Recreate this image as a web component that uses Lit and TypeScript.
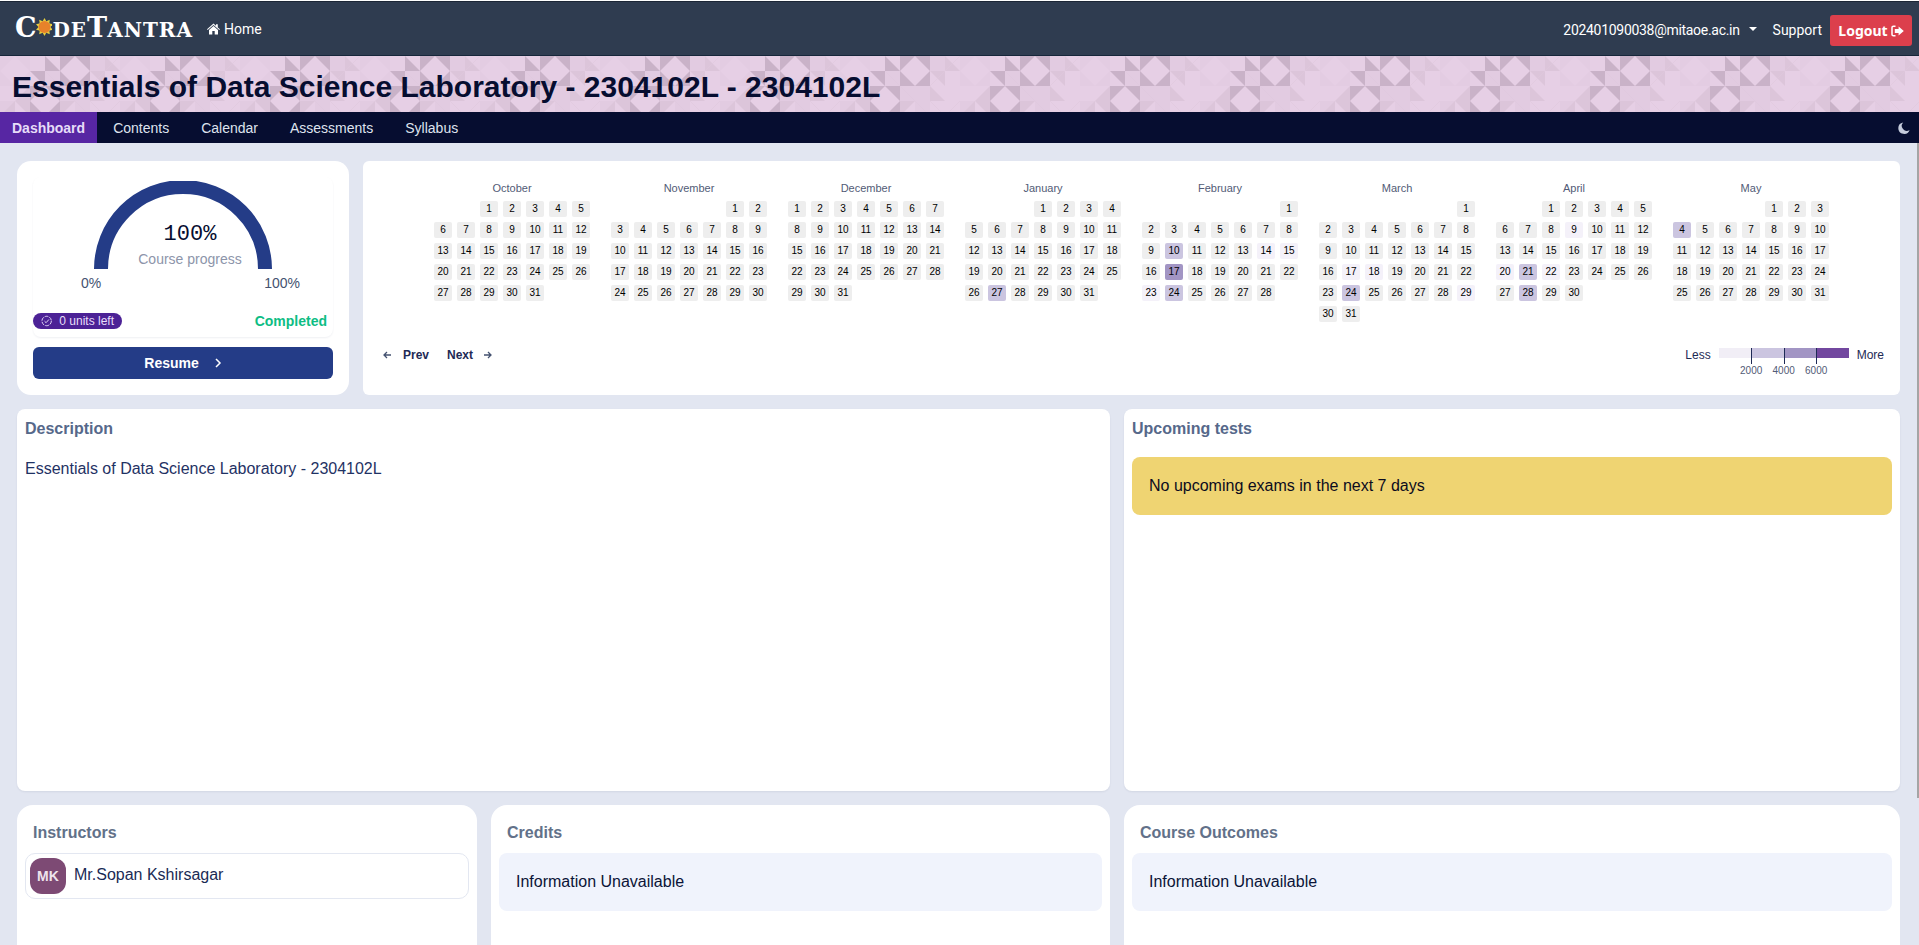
import { LitElement, html, css, svg } from "lit";
import { customElement } from "lit/decorators.js";

const MONTHS = [
  { name: "October", start: 2, days: 31, key: "oct" },
  { name: "November", start: 5, days: 30, key: "nov" },
  { name: "December", start: 0, days: 31, key: "dec" },
  { name: "January", start: 3, days: 31, key: "jan" },
  { name: "February", start: 6, days: 28, key: "feb" },
  { name: "March", start: 6, days: 31, key: "mar" },
  { name: "April", start: 2, days: 30, key: "apr" },
  { name: "May", start: 4, days: 31, key: "may" },
];

// activity level per day, everything else is level 0
const LEVELS: Record<string, Record<number, number>> = {
  jan: { 27: 2 },
  feb: { 10: 2, 14: 1, 15: 1, 17: 3, 23: 1, 24: 2 },
  mar: { 17: 1, 18: 1, 24: 2, 29: 1 },
  apr: { 9: 1, 20: 1, 21: 2, 22: 1, 28: 2 },
  may: { 4: 2 },
};

const corners = (x: number, y: number, s: number) => [
  `${x},${y} ${x + s / 2},${y} ${x},${y + s / 2}`,
  `${x + s},${y} ${x + s / 2},${y} ${x + s},${y + s / 2}`,
  `${x},${y + s} ${x},${y + s / 2} ${x + s / 2},${y + s}`,
  `${x + s},${y + s} ${x + s},${y + s / 2} ${x + s / 2},${y + s}`,
];

const tile = () => svg`
  <rect width="120" height="60" fill="#e6cfe5"></rect>
  <g fill="#e2cbe1">
    <rect x="45" y="15" width="15" height="15"></rect>
    <rect x="90" y="0" width="15" height="15"></rect>
    <rect x="60" y="30" width="30" height="15"></rect>
    <rect x="75" y="45" width="15" height="15"></rect>
    <rect x="0" y="45" width="15" height="15"></rect>
    ${corners(0, 0, 30).map((p) => svg`<polygon points=${p} fill="#e3cce2"></polygon>`)}
  </g>
  <g fill="#c9b2c8">
    ${corners(60, 0, 30).map((p) => svg`<polygon points=${p}></polygon>`)}
    ${corners(30, 30, 30).map((p) => svg`<polygon points=${p}></polygon>`)}
    <polygon points="45,0 60,15 45,15"></polygon>
    <polygon points="30,15 45,15 45,30"></polygon>
  </g>
  <g fill="#dcc5da">
    <polygon points="105,0 120,15 105,15"></polygon>
    <polygon points="90,15 105,15 105,30"></polygon>
    <polygon points="15,45 30,30 30,45"></polygon>
    <polygon points="15,45 30,45 30,60"></polygon>
    <polygon points="0,60 15,45 15,60"></polygon>
    <polygon points="60,45 75,45 60,60"></polygon>
    <polygon points="90,30 105,45 90,45"></polygon>
  </g>
  <g stroke="#dfc8de" stroke-width=".6" fill="none">
    <path d="M90 30 120 0M105 60 120 45M90 45 105 60M45 15 60 30M60 30 90 60"></path>
  </g>
`;

@customElement("app-root")
export class AppRoot extends LitElement {
  static styles = css`
    :host {
      display: block;
      position: relative;
      height: 945px;
      overflow: hidden;
      background: #e2e6f1;
      font-family: "Liberation Sans", Arial, sans-serif;
      color: #0b1437;
    }
    .topbar {
      height: 54px;
      background: #2f3c50;
      border-top: 1px solid #fff;
      box-shadow: inset 0 1px 0 #1c2636;
      border-bottom: 1px solid #16263a;
      display: flex;
      align-items: center;
      padding: 0 7px 0 15px;
      font-family: Roboto, sans-serif;
      font-size: 14px;
      color: #fff;
    }
    .logo {
      display: flex;
      align-items: baseline;
      font-family: "DejaVu Serif", serif;
      font-weight: 700;
      font-size: 20px;
      line-height: 1;
      color: #fff;
      width: 178px;
      margin-top: -2px;
    }
    .logo b {
      font-size: 27px;
    }
    .logo span {
      letter-spacing: 1px;
    }
    .logo svg {
      align-self: center;
      margin: 0 0 0 -1px;
    }
    .home {
      display: flex;
      align-items: center;
      gap: 4px;
      margin-left: 14px;
      margin-top: 2px;
    }
    .spacer {
      flex: 1;
    }
    .caret {
      width: 0;
      height: 0;
      border: 4px solid transparent;
      border-top-color: #fff;
      border-bottom: 0;
      margin: 0 0 2px 9px;
    }
    .user {
      display: flex;
      align-items: center;
      letter-spacing: -0.3px;
      margin-top: 4px;
    }
    .support {
      margin: 4px 8px 0 16px;
    }
    .logout {
      display: flex;
      align-items: center;
      gap: 3px;
      height: 31px;
      width: 82px;
      box-sizing: border-box;
      justify-content: center;
      background: #dc3f4c;
      border-radius: 3px;
      font-family: "Noto Sans", sans-serif;
      font-weight: 700;
      margin-top: 5px;
    }
    .banner {
      position: relative;
      height: 56px;
      overflow: hidden;
      background: #e6cfe5;
    }
    .banner svg {
      position: absolute;
      inset: 0;
    }
    .banner h1 {
      position: relative;
      margin: 0;
      padding-left: 12px;
      font-size: 30px;
      line-height: 61px;
      font-weight: 700;
      color: #060d30;
    }
    .tabs {
      height: 31px;
      background: #060d30;
      display: flex;
      align-items: center;
      font-size: 14px;
      color: #dfe3ee;
    }
    .tab {
      padding: 0 16px;
    }
    .tab.active {
      height: 100%;
      display: flex;
      align-items: center;
      padding: 0 12px;
      margin-right: 0;
      background: #5726a3;
      color: #e6dcf8;
      font-weight: 700;
    }
    .moon {
      margin-left: auto;
      margin-right: 9px;
    }
    .page {
      display: flex;
      flex-direction: column;
      gap: 14px;
      padding: 18px 19px 0 17px;
    }
    .row {
      display: flex;
      gap: 14px;
    }
    .card {
      background: #fff;
      border-radius: 14px;
      box-sizing: border-box;
    }
    .progress {
      width: 332px;
      height: 234px;
      padding: 16px;
      display: flex;
      flex-direction: column;
    }
    .gauge-box {
      height: 160px;
      border-radius: 8px;
      box-shadow: 0 1px 2px rgba(30, 40, 80, 0.07);
      display: flex;
      flex-direction: column;
    }
    .gauge {
      position: relative;
      margin: 4px auto 0;
      width: 178px;
      height: 88px;
    }
    .gauge svg {
      display: block;
    }
    .gauge-value {
      position: absolute;
      left: 96px;
      top: 42px;
      transform: translateX(-50%);
      font-family: "Liberation Mono", monospace;
      font-size: 22px;
      line-height: 24px;
      color: #060d30;
    }
    .gauge-label {
      position: absolute;
      left: 96px;
      top: 70px;
      transform: translateX(-50%);
      white-space: nowrap;
      font-size: 14px;
      line-height: 16px;
      color: #8d95aa;
    }
    .gauge-ends {
      display: flex;
      justify-content: space-between;
      padding: 6px 33px 0 48px;
      font-size: 14px;
      line-height: 16px;
      color: #445270;
    }
    .status {
      display: flex;
      align-items: center;
      justify-content: space-between;
      margin-top: 22px;
      padding-right: 6px;
    }
    .pill {
      display: flex;
      align-items: center;
      gap: 7px;
      height: 16px;
      padding: 0 8px;
      width: 89px;
      box-sizing: border-box;
      border-radius: 8px;
      background: #4c2296;
      color: #e8defa;
      font-size: 12px;
      white-space: nowrap;
    }
    .done {
      font-size: 14px;
      font-weight: 700;
      color: #0dbd84;
    }
    .resume {
      height: 32px;
      margin-top: 10px;
      background: #243c87;
      border-radius: 6px;
      color: #fff;
      font-size: 14px;
      font-weight: 700;
      display: flex;
      align-items: center;
      justify-content: center;
      gap: 15px;
    }
    .heat {
      flex: 1;
      height: 234px;
      padding: 20px 16px 0 20px;
      border-radius: 6px;
    }
    .months {
      display: flex;
      justify-content: center;
      gap: 21px;
      height: 141px;
      margin-left: -4px;
    }
    .month-name {
      font-size: 11px;
      line-height: 14px;
      color: #525b76;
      text-align: center;
      margin-bottom: 6px;
    }
    .days {
      display: grid;
      grid-template-columns: repeat(7, 18px);
      grid-auto-rows: 16px;
      gap: 5px;
    }
    .day {
      border-radius: 2px;
      background: #eeeeee;
      color: #000;
      font-size: 10px;
      line-height: 16px;
      text-align: center;
    }
    .day.l1 {
      background: #f4f1f9;
    }
    .day.l2 {
      background: #cbc5e0;
    }
    .day.l3 {
      background: #a295c4;
    }
    .heat-foot {
      display: flex;
      align-items: flex-start;
      margin-top: 26px;
      font-size: 12px;
      line-height: 14px;
      color: #1e2a55;
    }
    .nav {
      display: flex;
      align-items: center;
      font-weight: 700;
      height: 14px;
    }
    .nav svg {
      flex: none;
    }
    .prev {
      margin: 0 18px 0 12px;
    }
    .next {
      margin-right: 11px;
    }
    .legend {
      margin-left: auto;
      display: flex;
      align-items: flex-start;
      gap: 8px;
    }
    .scale {
      display: flex;
      width: 130px;
      height: 10px;
    }
    .seg {
      position: relative;
      flex: 1;
    }
    .seg i {
      position: absolute;
      z-index: 1;
      right: -1px;
      top: 0;
      width: 1px;
      height: 16px;
      background: #1e2a55;
    }
    .seg span {
      position: absolute;
      right: -16px;
      top: 17px;
      width: 32px;
      text-align: center;
      font-size: 10px;
      line-height: 12px;
      color: #525b76;
    }
    .panel {
      height: 382px;
      padding: 0 8px;
      border-radius: 8px;
      box-shadow: 0 1px 2px rgba(30, 40, 80, 0.08);
    }
    .wide {
      width: 1093px;
    }
    .side {
      width: 776px;
    }
    h2 {
      margin: 0;
      font-size: 16px;
      line-height: 20px;
      font-weight: 700;
      color: #56688a;
    }
    .panel h2 {
      padding-top: 10px;
    }
    .panel p {
      margin: 20px 0 0;
      font-size: 16px;
      line-height: 20px;
      color: #1f3264;
    }
    .alert {
      margin-top: 18px;
      height: 58px;
      padding: 0 17px;
      display: flex;
      align-items: center;
      background: #efd472;
      border-radius: 8px;
      font-size: 16px;
      color: #0b0b1e;
    }
    .bottom .card {
      height: 200px;
      padding: 18px 8px 0;
      border-radius: 16px;
    }
    .bottom h2 {
      padding: 0 8px;
      margin-bottom: 10px;
      color: #627189;
    }
    .people {
      width: 460px;
    }
    .credits {
      width: 619px;
    }
    .person {
      height: 46px;
      box-sizing: border-box;
      border: 1px solid #e3e7f1;
      border-radius: 10px;
      padding: 4px;
      display: flex;
      gap: 8px;
      font-size: 16px;
      line-height: 34px;
      color: #1a2a55;
    }
    .avatar {
      width: 36px;
      height: 36px;
      border-radius: 12px;
      background: #7d4a74;
      color: #eee4ee;
      font-size: 14px;
      font-weight: 700;
      line-height: 36px;
      text-align: center;
    }
    .info {
      height: 58px;
      padding: 0 17px;
      display: flex;
      align-items: center;
      background: #f0f3fc;
      border-radius: 8px;
      font-size: 16px;
      color: #0b1437;
    }
    .thumb {
      position: absolute;
      right: 0;
      top: 143px;
      width: 2px;
      height: 655px;
      background: #a5a5a5;
    }
  `;

  private renderMonth(m: (typeof MONTHS)[number]) {
    const levels = LEVELS[m.key] ?? {};
    const blanks = Array.from({ length: m.start });
    const days = Array.from({ length: m.days }, (_, i) => i + 1);
    return html`
      <div>
        <div class="month-name">${m.name}</div>
        <div class="days">
          ${blanks.map(() => html`<div></div>`)}
          ${days.map(
            (d) => html`<div class="day ${levels[d] ? `l${levels[d]}` : ""}">${d}</div>`
          )}
        </div>
      </div>
    `;
  }

  private sun() {
    const rays = Array.from({ length: 10 }, (_, i) => i * 36);
    return html`<svg width="20" height="24" viewBox="-10 -12 20 24">
      ${rays.map(
        (r) => svg`<polygon points="-2.6,-6 2.6,-6 0,-10.5" fill="#e6cf3f" transform="rotate(${r})"></polygon>`
      )}
      <circle r="7" fill="#e8822a"></circle>
    </svg>`;
  }

  render() {
    return html`
      <header class="topbar">
        <div class="logo"><b>C</b>${this.sun()}<span>DE</span><b>T</b><span>ANTRA</span></div>
        <div class="home">
          <svg width="13" height="12" viewBox="0 0 13 12" fill="#fff">
            <path d="M6.5 0.6 0 6.3l.7.8 5.8-5 5.8 5 .7-.8-2.2-1.9V1.2H9v1.6ZM6.5 3 2 6.9v4.6h3.3V8h2.4v3.5H11V6.9Z"></path>
          </svg>
          <span>Home</span>
        </div>
        <div class="spacer"></div>
        <div class="user">202401090038@mitaoe.ac.in<span class="caret"></span></div>
        <div class="support">Support</div>
        <div class="logout">
          Logout
          <svg width="13" height="12" viewBox="0 0 13 12" fill="none">
            <path d="M4.5 1.2H2.4A1.4 1.4 0 0 0 1 2.6v6.8a1.4 1.4 0 0 0 1.4 1.4h2.1" stroke="#fff" stroke-width="1.5"></path>
            <path d="M7.6 1.4 12.8 6 7.6 10.6V8H3.8V4h3.8Z" fill="#fff"></path>
          </svg>
        </div>
      </header>

      <div class="banner">
        <svg width="100%" height="56">
          <defs>
            <pattern id="tile" width="120" height="60" patternUnits="userSpaceOnUse">${tile()}</pattern>
          </defs>
          <rect width="100%" height="56" fill="url(#tile)"></rect>
        </svg>
        <h1>Essentials of Data Science Laboratory - 2304102L - 2304102L</h1>
      </div>

      <nav class="tabs">
        <div class="tab active">Dashboard</div>
        <div class="tab">Contents</div>
        <div class="tab">Calendar</div>
        <div class="tab">Assessments</div>
        <div class="tab">Syllabus</div>
        <svg class="moon" width="12" height="12" viewBox="0 0 12 12">
          <path d="M5.2.4A5.8 5.8 0 1 0 11.6 8 5 5 0 0 1 5.2.4Z" fill="#c5cbdc"></path>
        </svg>
      </nav>

      <main class="page">
        <div class="row">
          <section class="card progress">
            <div class="gauge-box">
              <div class="gauge">
                <svg width="178" height="88" viewBox="0 0 178 88">
                  <path d="M7 88A82 82 0 0 1 171 88" fill="none" stroke="#243c87" stroke-width="14"></path>
                </svg>
                <div class="gauge-value">100%</div>
                <div class="gauge-label">Course progress</div>
              </div>
              <div class="gauge-ends"><span>0%</span><span>100%</span></div>
              <div class="status">
                <div class="pill">
                  <svg width="12" height="12" viewBox="0 0 12 12" fill="none" stroke="#e8defa">
                    <circle cx="6" cy="6" r="5" stroke-dasharray="4 1.2"></circle>
                    <path d="M3.8 6.2 5.4 7.8 8.4 4.4"></path>
                  </svg>
                  <span>0 units left</span>
                </div>
                <div class="done">Completed</div>
              </div>
            </div>
            <div class="resume">
              <span>Resume</span>
              <svg width="8" height="10" viewBox="0 0 8 10" fill="none" stroke="#fff" stroke-width="1.5">
                <path d="M2 1l4 4-4 4"></path>
              </svg>
            </div>
          </section>

          <section class="card heat">
            <div class="months">${MONTHS.map((m) => this.renderMonth(m))}</div>
            <div class="heat-foot">
              <div class="nav">
                <svg width="8" height="8" viewBox="0 0 8 8" fill="none" stroke="#445270" stroke-width="1.3">
                  <path d="M8 4H1M4 1 1 4l3 3"></path>
                </svg>
                <span class="prev">Prev</span>
                <span class="next">Next</span>
                <svg width="8" height="8" viewBox="0 0 8 8" fill="none" stroke="#445270" stroke-width="1.3">
                  <path d="M0 4h7M4 1l3 3-3 3"></path>
                </svg>
              </div>
              <div class="legend">
                <span>Less</span>
                <div class="scale">
                  <div class="seg" style="background:#f1eef6"><i></i><span>2000</span></div>
                  <div class="seg" style="background:#cbc5e0"><i></i><span>4000</span></div>
                  <div class="seg" style="background:#a295c4"><i></i><span>6000</span></div>
                  <div class="seg" style="background:#72479f"></div>
                </div>
                <span>More</span>
              </div>
            </div>
          </section>
        </div>

        <div class="row">
          <section class="card panel wide">
            <h2>Description</h2>
            <p>Essentials of Data Science Laboratory - 2304102L</p>
          </section>
          <section class="card panel side">
            <h2>Upcoming tests</h2>
            <div class="alert">No upcoming exams in the next 7 days</div>
          </section>
        </div>

        <div class="row bottom">
          <section class="card people">
            <h2>Instructors</h2>
            <div class="person">
              <div class="avatar">MK</div>
              <span>Mr.Sopan Kshirsagar</span>
            </div>
          </section>
          <section class="card credits">
            <h2>Credits</h2>
            <div class="info">Information Unavailable</div>
          </section>
          <section class="card side">
            <h2>Course Outcomes</h2>
            <div class="info">Information Unavailable</div>
          </section>
        </div>
      </main>
      <div class="thumb"></div>
    `;
  }
}
